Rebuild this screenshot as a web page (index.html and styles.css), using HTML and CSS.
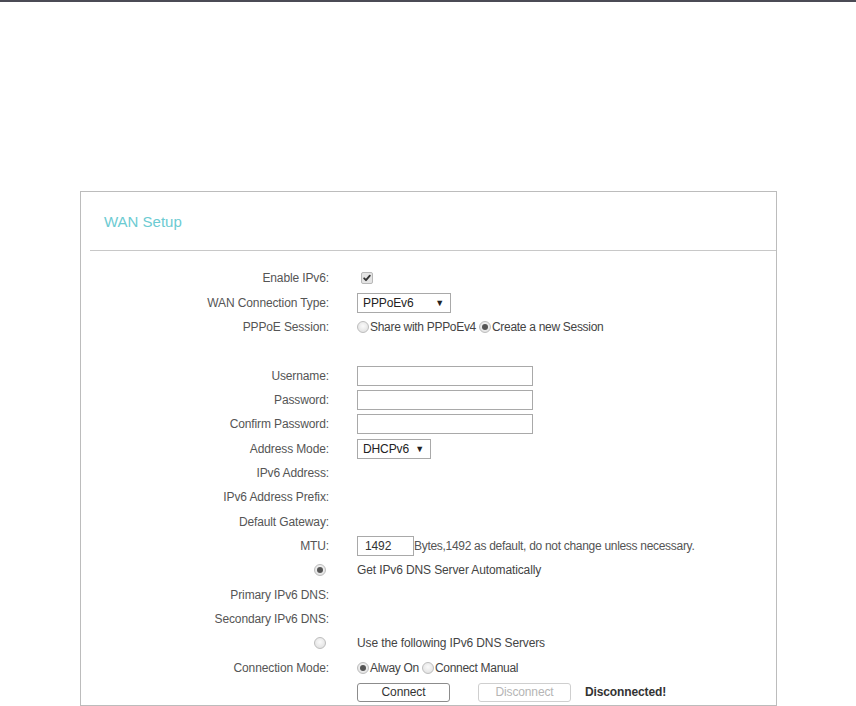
FILE: index.html
```html
<!DOCTYPE html>
<html>
<head>
<meta charset="utf-8">
<link rel="stylesheet" href="styles.css">
</head>
<body>
<div class="topbar"></div>
<div class="panel">
  <div class="panel-head"><h2 class="title">WAN Setup</h2></div>
  <div class="sep"></div>
  <div class="form">
    <div class="row"><div class="label">Enable IPv6:</div><div class="ctrl"><span class="checkbox"><svg width="12" height="12" viewBox="0 0 12 12"><path d="M2.6 6.4 L4.8 8.6 L9.4 3.2" fill="none" stroke="#333" stroke-width="2.2" stroke-linecap="round" stroke-linejoin="round"/></svg></span></div></div>
    <div class="row"><div class="label">WAN Connection Type:</div><div class="ctrl"><div class="select sel-wide"><span>PPPoEv6</span><span class="arrow">▼</span></div></div></div>
    <div class="row"><div class="label">PPPoE Session:</div><div class="ctrl"><span class="radio"></span><span class="rtext">Share with PPPoEv4</span><span class="radio on gap"></span><span class="rtext">Create a new Session</span></div></div>
    <div class="row"></div>
    <div class="row"><div class="label">Username:</div><div class="ctrl"><div class="input"></div></div></div>
    <div class="row"><div class="label">Password:</div><div class="ctrl"><div class="input"></div></div></div>
    <div class="row"><div class="label">Confirm Password:</div><div class="ctrl"><div class="input"></div></div></div>
    <div class="row"><div class="label">Address Mode:</div><div class="ctrl"><div class="select sel-narrow"><span>DHCPv6</span><span class="arrow">▼</span></div></div></div>
    <div class="row"><div class="label">IPv6 Address:</div><div class="ctrl"></div></div>
    <div class="row"><div class="label">IPv6 Address Prefix:</div><div class="ctrl"></div></div>
    <div class="row"><div class="label">Default Gateway:</div><div class="ctrl"></div></div>
    <div class="row"><div class="label">MTU:</div><div class="ctrl"><div class="input mtu">1492</div><span class="note">Bytes,1492 as default, do not change unless necessary.</span></div></div>
    <div class="row"><div class="label"><span class="radio on lr"></span></div><div class="ctrl"><span class="text">Get IPv6 DNS Server Automatically</span></div></div>
    <div class="row"><div class="label">Primary IPv6 DNS:</div><div class="ctrl"></div></div>
    <div class="row"><div class="label">Secondary IPv6 DNS:</div><div class="ctrl"></div></div>
    <div class="row"><div class="label"><span class="radio lr"></span></div><div class="ctrl"><span class="text">Use the following IPv6 DNS Servers</span></div></div>
    <div class="row"><div class="label">Connection Mode:</div><div class="ctrl"><span class="radio on"></span><span class="rtext">Alway On</span><span class="radio gap"></span><span class="rtext">Connect Manual</span></div></div>
    <div class="row"><div class="label"></div><div class="ctrl"><button class="btn">Connect</button><button class="btn disabled" disabled>Disconnect</button><span class="status">Disconnected!</span></div></div>
  </div>
</div>
</body>
</html>
```
FILE: styles.css
```css
* { box-sizing: border-box; }
html, body { margin: 0; padding: 0; background: #fff; }
body { font-family: "Liberation Sans", Arial, sans-serif; font-size: 12px; color: #555; letter-spacing: -0.12px; }

.topbar { height: 2px; background: #4b4b55; }

.panel {
  margin: 189px 0 0 80px;
  width: 697px;
  height: 515px;
  border: 1px solid #bcbcbc;
  overflow: hidden;
}
.panel-head {
  height: 58px;
  display: flex;
  align-items: center;
  padding-left: 23px;
  padding-top: 1px;
}
.title {
  margin: 0;
  font-size: 15px;
  font-weight: normal;
  color: #6ccbd2;
  letter-spacing: 0;
}
.sep { margin-left: 9px; border-top: 1px solid #c8c8c8; }

.form { padding-top: 15px; }
.row {
  height: 24.35px;
  display: flex;
  align-items: center;
}
.label {
  width: 248px;
  flex: none;
  text-align: right;
  color: #555;
  display: flex;
  justify-content: flex-end;
  align-items: center;
}
.ctrl {
  margin-left: 28px;
  display: flex;
  align-items: center;
  color: #333;
  white-space: pre;
}

.checkbox {
  width: 12px; height: 12px;
  margin-left: 4px;
  border: 1px solid #b8b8b8;
  border-radius: 2px;
  background: #e4e4e4;
  display: flex; align-items: center; justify-content: center;
}
.checkbox svg { display: block; }

.select {
  height: 20px;
  border: 1px solid #a9a9a9;
  background: #fff;
  display: flex;
  align-items: center;
  justify-content: space-between;
  padding: 0 6px 0 5px;
  color: #222;
}
.sel-wide { width: 94px; }
.sel-narrow { width: 74px; }
.arrow { font-size: 9px; color: #222; }

.input {
  width: 176px;
  height: 20px;
  border: 1px solid #a9a9a9;
  background: #fff;
}
.input.mtu {
  width: 57px;
  padding-left: 7px;
  line-height: 18px;
  color: #333;
}
.note { color: #555; letter-spacing: -0.3px; }
.text { color: #444; }

.radio {
  width: 12px; height: 12px;
  border-radius: 50%;
  border: 1px solid #bdbdbd;
  background: radial-gradient(circle at 50% 40%, #fafafa, #dcdcdc);
  display: inline-flex; align-items: center; justify-content: center;
  margin-right: 1px;
  flex: none;
}
.radio.gap { margin-left: 3px; }
.radio.on::after {
  content: "";
  width: 6px; height: 6px;
  border-radius: 50%;
  background: #555;
}
.radio.lr { margin-right: 3px; }
.rtext { color: #444; letter-spacing: -0.3px; }

.btn {
  font-family: "Liberation Sans", Arial, sans-serif;
  font-size: 12px;
  letter-spacing: -0.12px;
  width: 93px;
  height: 19px;
  padding: 0;
  border: 1px solid #8c8c8c;
  border-radius: 3px;
  background: #fff;
  color: #333;
}
.btn.disabled {
  margin-left: 28px;
  border-color: #cfcfcf;
  color: #b5b5b5;
}
.status {
  margin-left: 14px;
  font-weight: bold;
  color: #333;
}
```
